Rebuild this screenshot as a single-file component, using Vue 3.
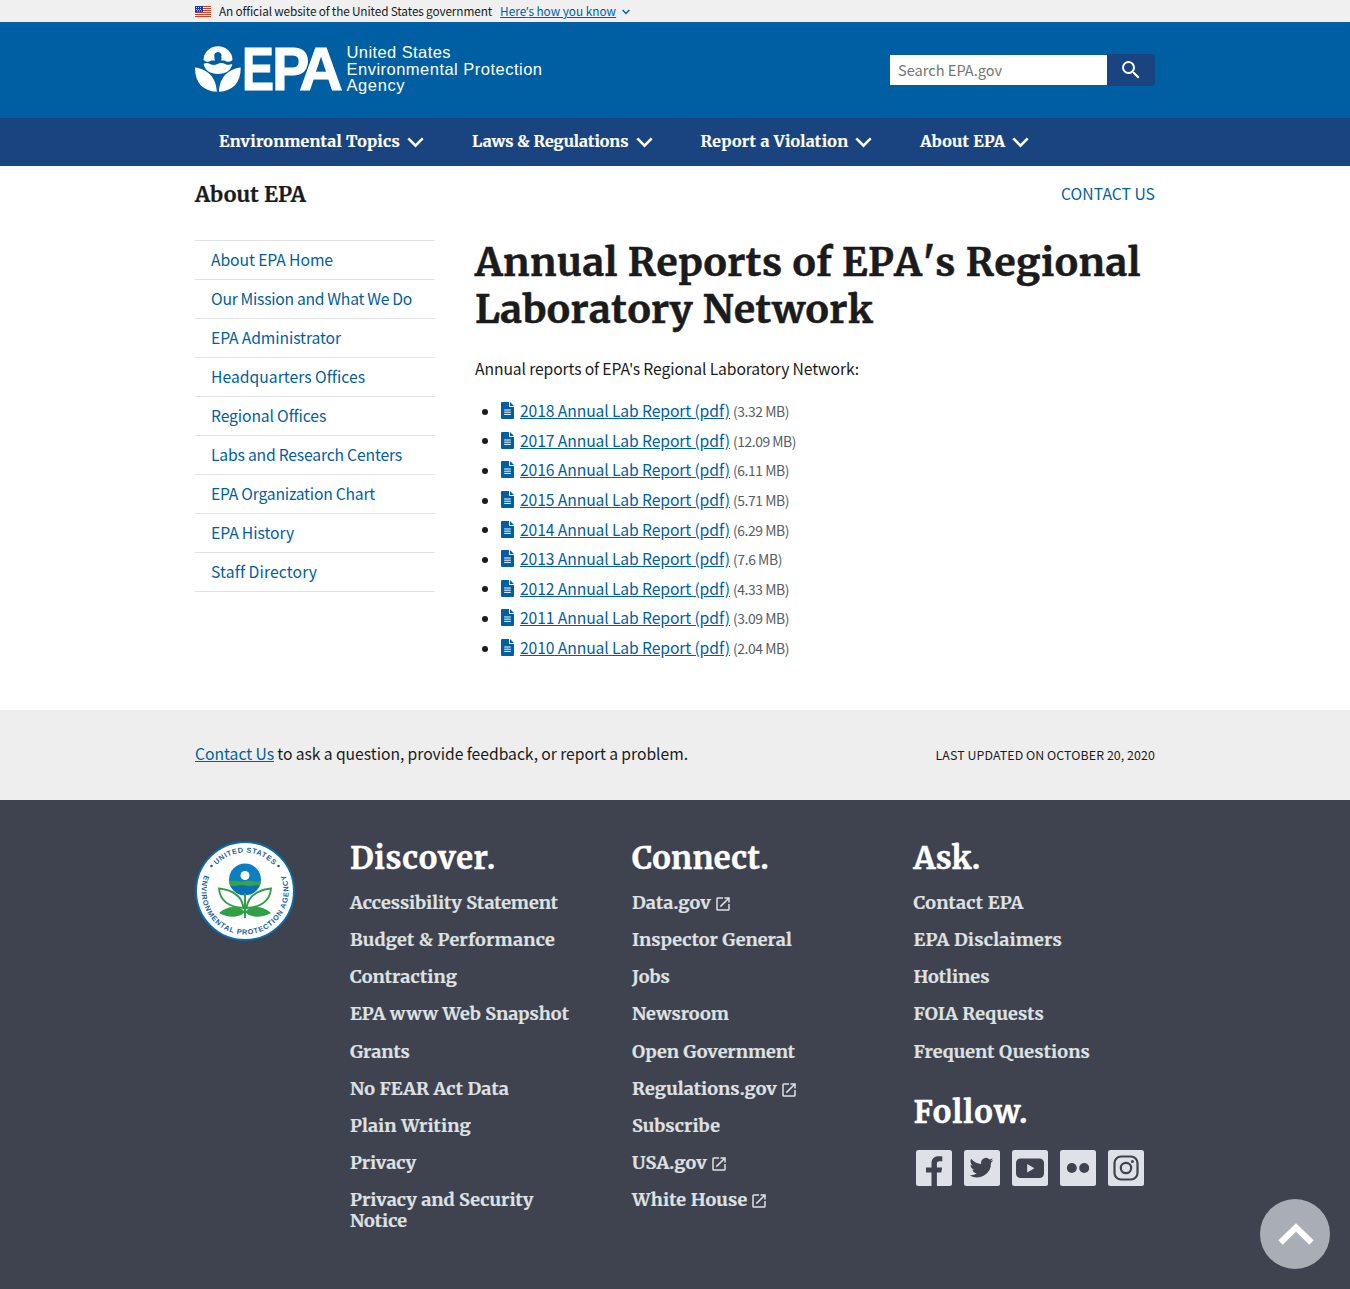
<script setup>
// Tracks a text run so that it fills the given width in pixels.
const vFit = {
  mounted(el, { value }) {
    if (!value) return
    const natural = el.getBoundingClientRect().width
    const count = el.textContent.length
    el.style.letterSpacing = ((value - natural) / count).toFixed(3) + 'px'
  },
}

const menu = [
  { label: 'Environmental Topics', w: 181 },
  { label: 'Laws & Regulations', w: 156.6 },
  { label: 'Report a Violation', w: 147.7 },
  { label: 'About EPA', w: 85 },
]

const sidebar = [
  { label: 'About EPA Home', w: 122 },
  { label: 'Our Mission and What We Do', w: 201 },
  { label: 'EPA Administrator', w: 130 },
  { label: 'Headquarters Offices', w: 154 },
  { label: 'Regional Offices', w: 115 },
  { label: 'Labs and Research Centers', w: 191 },
  { label: 'EPA Organization Chart', w: 164 },
  { label: 'EPA History', w: 83 },
  { label: 'Staff Directory', w: 106 },
]

const reports = [
  { year: 2018, size: '3.32 MB', w: 56 },
  { year: 2017, size: '12.09 MB', w: 63 },
  { year: 2016, size: '6.11 MB', w: 56 },
  { year: 2015, size: '5.71 MB', w: 56 },
  { year: 2014, size: '6.29 MB', w: 56 },
  { year: 2013, size: '7.6 MB', w: 49 },
  { year: 2012, size: '4.33 MB', w: 56 },
  { year: 2011, size: '3.09 MB', w: 56 },
  { year: 2010, size: '2.04 MB', w: 56 },
]

const discover = [
  { label: 'Accessibility Statement', w: 208 },
  { label: 'Budget & Performance', w: 205 },
  { label: 'Contracting', w: 107 },
  { label: 'EPA www Web Snapshot', w: 219 },
  { label: 'Grants', w: 60 },
  { label: 'No FEAR Act Data', w: 159 },
  { label: 'Plain Writing', w: 121 },
  { label: 'Privacy', w: 66 },
]

const connect = [
  { label: 'Data.gov', w: 79, external: true },
  { label: 'Inspector General', w: 160 },
  { label: 'Jobs', w: 38 },
  { label: 'Newsroom', w: 97 },
  { label: 'Open Government', w: 163 },
  { label: 'Regulations.gov', w: 145, external: true },
  { label: 'Subscribe', w: 88 },
  { label: 'USA.gov', w: 75, external: true },
  { label: 'White House', w: 115.500, external: true },
]

const ask = [
  { label: 'Contact EPA', w: 110 },
  { label: 'EPA Disclaimers', w: 148.500 },
  { label: 'Hotlines', w: 76 },
  { label: 'FOIA Requests', w: 130.500 },
  { label: 'Frequent Questions', w: 176.500 },
]
</script>

<template>
  <div class="page">
    <section class="banner">
      <div class="wrap banner-row">
        <svg class="flag" width="16" height="11" viewBox="0 0 16 11">
          <rect width="16" height="11" fill="#fff" />
          <path d="M0 .5h16M0 2.5h16M0 4.5h16M0 6.5h16M0 8.5h16M0 10.5h16" stroke="#db3e1f" />
          <rect width="8" height="6" fill="#1e33b1" />
          <path d="M1 1.500h6M1 3.500h6M2 4.900h5" stroke="#fff" stroke-width=".8" stroke-dasharray="1 1" />
        </svg>
        <span v-fit="273">An official website of the United States government</span>
        <a class="banner-link"><span v-fit="116">Here<span class="apos">’</span>s how you know</span></a>
        <svg class="banner-caret" width="8" height="6" viewBox="0 0 8 6"><path d="M.6 1 4 4.400l3.400-3.400" fill="none" stroke="#005ea2" stroke-width="1.400" /></svg>
      </div>
    </section>

    <header class="masthead">
      <div class="wrap masthead-row">
        <svg class="logo" width="350" height="52" viewBox="195 44 350 52">
          <g fill="#fff">
            <path d="M203.500 60a14.500 13.800 0 0 1 29 0 7 7 0 0 1-3.500 1.800 6 6 0 0 1-4.500-1.300h-3.500c.6-1 .8-2.200.3-3.400a3.700 3.700 0 1 0-6.800 0c-.3 1.200 0 2.400.6 3.400h-4a6 6 0 0 1-4.400 1.200 7 7 0 0 1-3.200-1.700z" />
            <path d="M203.600 64c2.200-1.400 4.400-1 6.400.1 2.600 1.300 5 1.200 7.600-.1 2.600-1.300 5-1.200 7.600 0 2.400 1.200 4.700 1 7.200 0-1.400 6.500-6.700 10-14.400 10s-13-3.500-14.400-10z" />
            <path d="M195 67.500c11.500 1.600 21 8.500 21.900 24.300-13.900-.8-22-8.800-21.900-24.300zM240.700 67.500c-11.500 1.600-20.900 8.500-21.800 24.300 13.800-.8 21.900-8.800 21.800-24.300z" />
          </g>
          <g class="epa" fill="#fff" stroke="#fff" stroke-width="1.200">
            <text x="242" y="89.800" textLength="32" lengthAdjust="spacingAndGlyphs">E</text>
            <text x="272.300" y="89.800" textLength="37" lengthAdjust="spacingAndGlyphs">P</text>
            <text x="299.300" y="89.800" textLength="43.500" lengthAdjust="spacingAndGlyphs">A</text>
          </g>
          <g class="agency" fill="#fff">
            <text x="346.500" y="58.300" textLength="104">United States</text>
            <text x="346.500" y="74.700" textLength="195.500">Environmental Protection</text>
            <text x="346.500" y="91" textLength="58">Agency</text>
          </g>
        </svg>
        <form class="search">
          <input type="text" placeholder="Search EPA.gov" />
          <button type="button" aria-label="Search">
            <svg width="24" height="24" viewBox="0 0 24 24" fill="#fff"><path d="M15.500 14h-.79l-.28-.27A6.470 6.470 0 0 0 16 9.500 6.500 6.500 0 1 0 9.500 16c1.610 0 3.090-.59 4.230-1.570l.27.28v.79l5 4.990L20.490 19l-4.990-5zm-6 0C7.010 14 5 11.990 5 9.500S7.010 5 9.500 5 14 7.010 14 9.500 11.990 14 9.500 14z" /></svg>
          </button>
        </form>
      </div>
    </header>

    <nav class="menu">
      <div class="wrap menu-row">
        <a v-for="m in menu" :key="m.label">
          <span v-fit="m.w">{{ m.label }}</span>
          <svg width="17" height="11" viewBox="0 0 17 11"><path d="M1.300 1.400 8.500 8.600l7.200-7.200" fill="none" stroke="#fff" stroke-width="2.600" /></svg>
        </a>
      </div>
    </nav>

    <div class="wrap site-row">
      <h2><span v-fit="111">About EPA</span></h2>
      <a><span v-fit="94">CONTACT US</span></a>
    </div>

    <div class="wrap body-row">
      <aside>
        <a v-for="s in sidebar" :key="s.label"><span v-fit="s.w">{{ s.label }}</span></a>
      </aside>
      <main>
        <h1><span v-fit="666">Annual Reports of EPA's Regional</span><br /><span v-fit="398.500">Laboratory Network</span></h1>
        <p><span v-fit="384">Annual reports of EPA's Regional Laboratory Network:</span></p>
        <ul>
          <li v-for="r in reports" :key="r.year">
            <i class="dot"></i>
            <svg class="doc" width="13" height="17" viewBox="0 0 13 17">
              <path d="M1 0h7v5h5v11a1 1 0 0 1-1 1H1a1 1 0 0 1-1-1V1a1 1 0 0 1 1-1z" fill="#005ea2" />
              <path d="M9 0l4 4H9z" fill="#005ea2" />
              <path d="M3.200 8h6.600M3.200 10.200h6.600M3.200 12.400h6.600" stroke="#fff" />
            </svg>
            <a><span v-fit="210">{{ r.year }} Annual Lab Report (pdf)</span></a>
            <span class="size"><span v-fit="r.w">({{ r.size }})</span></span>
          </li>
        </ul>
      </main>
    </div>

    <section class="feedback">
      <div class="wrap feedback-row">
        <div><a><span v-fit="79">Contact Us</span></a><span v-fit="414" class="ask-text"> to ask a question, provide feedback, or report a problem.</span></div>
        <div class="updated"><span v-fit="219.500">LAST UPDATED ON OCTOBER 20, 2020</span></div>
      </div>
    </section>

    <footer>
      <div class="wrap footer-row">
        <svg class="seal" width="100" height="102" viewBox="-50 -51 100 102">
          <defs>
            <path id="arc-top" d="M-38.500 0A38.500 38.500 0 0 1 38.500 0" />
            <path id="arc-bottom" d="M-38.400 -20.400A43.500 43.500 0 1 0 38.400 -20.400" />
          </defs>
          <circle r="49" fill="#fff" stroke="#0a6ba8" stroke-width="2" />
          <g class="seal-text" fill="#1c5f96">
            <text text-anchor="middle"><textPath href="#arc-top" startOffset="50%" textLength="64">UNITED STATES</textPath></text>
            <text text-anchor="middle"><textPath href="#arc-bottom" startOffset="50%" textLength="169">ENVIRONMENTAL PROTECTION AGENCY</textPath></text>
            <circle cx="-33.500" cy="-25" r="1.300" /><circle cx="33.500" cy="-25" r="1.300" />
          </g>
          <circle cy="-11.500" r="16" fill="#0b7fc0" />
          <path d="M-15.800-10q5-1 8 0 4 .8 8 0t8 0q4 .6 7.600 0a16 16 0 0 1-1.300 5.500h-29.200a16 16 0 0 1-1.100-5.500z" fill="#37a24a" />
          <path d="M-14.500-5.500q3 1 7 0 4-1 8 0t8 0q4-.8 6 0A16 16 0 0 1-14.500-5.500z" fill="#0b6fb6" />
          <circle cy="-15.500" r="4.500" fill="#fff" />
          <g fill="#fff" stroke="#2fa047" stroke-width="1.900">
            <path d="M-1.500 17C-3 5-13-1-26-2.500-25 10-16 16-1.500 17zM1.500 17C3 5 13-1 26-2.500 25 10 16 16 1.500 17z" />
          </g>
          <path d="M-26 22C-17 14-6 15-1 20V2h2v18c5-5 16-6 25 2-9 5-19 5-25 0v5h-2v-5c-6 5-16 5-25 0z" fill="#2fa047" />
        </svg>

        <div class="col">
          <h3><span v-fit="146">Discover.</span></h3>
          <a v-for="l in discover" :key="l.label"><span v-fit="l.w">{{ l.label }}</span></a>
          <a><span v-fit="183.500">Privacy and Security</span><br /><span v-fit="57">Notice</span></a>
        </div>
        <div class="col">
          <h3><span v-fit="137">Connect.</span></h3>
          <a v-for="l in connect" :key="l.label">
            <span v-fit="l.w">{{ l.label }}</span>
            <svg v-if="l.external" class="ext" width="18" height="18" viewBox="0 0 24 24" fill="#dfe1e2"><path d="M19 19H5V5h7V3H5a2 2 0 0 0-2 2v14a2 2 0 0 0 2 2h14c1.100 0 2-.9 2-2v-7h-2v7zM14 3v2h3.590l-9.830 9.830 1.410 1.410L19 6.410V10h2V3h-7z" /></svg>
          </a>
        </div>
        <div class="col">
          <h3><span v-fit="67">Ask.</span></h3>
          <a v-for="l in ask" :key="l.label"><span v-fit="l.w">{{ l.label }}</span></a>
          <h3 class="follow"><span v-fit="115">Follow.</span></h3>
          <div class="social">
            <svg width="36" height="36" viewBox="0 0 36 36"><rect width="36" height="36" rx="2.500" fill="#dfe1e9" /><path d="M15.500 36V22.600H10v-5h5.500v-4.300c0-4.800 2.900-7 7-7 1.700 0 3 .1 3.800.2v4.700h-2.800c-2.100 0-2.600 1-2.600 2.600v3.800h5.200l-.8 5h-4.400V36z" fill="#3e434f" /></svg>
            <svg width="36" height="36" viewBox="0 0 36 36"><rect width="36" height="36" rx="2.500" fill="#dfe1e9" /><path transform="translate(5.500 5.500) scale(1.040)" d="M23 4.500a9.500 9.500 0 0 1-2.700.8 4.700 4.700 0 0 0 2-2.600 9.400 9.400 0 0 1-3 1.100 4.700 4.700 0 0 0-8 4.300 13.400 13.400 0 0 1-9.700-4.900 4.700 4.700 0 0 0 1.500 6.300 4.700 4.700 0 0 1-2.100-.6 4.700 4.700 0 0 0 3.800 4.700 4.700 4.700 0 0 1-2.100.1 4.700 4.700 0 0 0 4.400 3.300A9.500 9.500 0 0 1 0 18.900a13.400 13.400 0 0 0 20.600-12 9.600 9.600 0 0 0 2.400-2.400z" fill="#3e434f" /></svg>
            <svg width="36" height="36" viewBox="0 0 36 36"><rect width="36" height="36" rx="2.500" fill="#dfe1e9" /><rect x="4" y="8.500" width="28" height="19.500" rx="4.500" fill="#3e434f" /><path d="M15.200 14v8.400l7.200-4.200z" fill="#dfe1e9" /></svg>
            <svg width="36" height="36" viewBox="0 0 36 36"><rect width="36" height="36" rx="2.500" fill="#dfe1e9" /><circle cx="11.800" cy="18" r="5" fill="#3e434f" /><circle cx="24.200" cy="18" r="5" fill="#3e434f" /></svg>
            <svg width="36" height="36" viewBox="0 0 36 36"><rect width="36" height="36" rx="2.500" fill="#dfe1e9" /><g fill="none" stroke="#3e434f" stroke-width="2.200"><rect x="6.500" y="6.500" width="23" height="23" rx="6.500" /><circle cx="18" cy="18" r="5.200" /></g><circle cx="24.400" cy="11.600" r="1.500" fill="#3e434f" /></svg>
          </div>
        </div>
      </div>
    </footer>

    <a class="to-top" aria-label="Back to top">
      <svg width="36" height="24" viewBox="0 0 36 24"><path d="M2.500 20.500 18 5.500l15.500 15" fill="none" stroke="#fff" stroke-width="6" /></svg>
    </a>
  </div>
</template>

<style>
body {
  margin: 0;
}
</style>

<style scoped>
.page {
  position: relative;
  height: 1289px;
  overflow: hidden;
  display: flex;
  flex-direction: column;
  background: #fff;
  color: #1b1b1b;
  font-family: "Source Sans Pro", "Noto Sans CJK SC", sans-serif;
  font-size: 15.700px;
  line-height: 24px;
  white-space: nowrap;
  font-optical-sizing: none;
  word-spacing: -.2px;
}
.wrap {
  width: 960px;
  margin: 0 auto;
  display: flex;
}
h1, h2, h3, p, ul {
  margin: 0;
  padding: 0;
}
h1, h2, h3, .menu, .col {
  font-family: "Merriweather", "DejaVu Serif", serif;
  font-weight: 700;
  word-spacing: 0;
  -webkit-text-stroke: .2px;
}
a {
  color: #005ea2;
}

.banner {
  height: 22px;
  background: #f0f0f0;
  font-size: 11.800px;
  line-height: 22px;
}
.banner-row {
  align-items: center;
  height: 22px;
}
.flag {
  margin-right: 8px;
}
.banner-link {
  margin: 0 6px 0 8px;
  text-decoration: underline;
}
.banner-caret {
  margin-top: 2px;
}
.apos {
  font-family: "Open Sans", "Noto Sans", sans-serif;
}

.masthead {
  height: 96px;
  background: #005ea2;
}
.masthead-row {
  height: 96px;
  align-items: center;
  justify-content: space-between;
}
.logo {
  overflow: visible;
}
.epa {
  font: 700 61px "Liberation Sans", Arial, sans-serif;
}
.agency {
  font: 400 16.500px "Liberation Sans", Arial, sans-serif;
  word-spacing: 0;
}
.search {
  display: flex;
  width: 265px;
  height: 32px;
}
.search input {
  box-sizing: border-box;
  width: 217px;
  height: 30px;
  margin: 1px 0;
  padding: 0 8px 2px;
  border: 0;
  border-radius: 0;
  background: #fff;
  font: 14.600px "Source Sans Pro", "Noto Sans CJK SC", sans-serif;
}
.search input::placeholder {
  color: #757575;
}
.search button {
  width: 48px;
  height: 32px;
  padding: 0;
  border: 0;
  border-radius: 0 4px 4px 0;
  background: #1a4480;
  display: flex;
  align-items: center;
  justify-content: center;
}

.menu {
  height: 48px;
  background: #1a4480;
  font-size: 16px;
}
.menu-row {
  height: 46px;
  align-items: center;
}
.menu a {
  display: flex;
  align-items: center;
  gap: 7px;
  padding: 0 24px;
  color: #fff;
}
.menu svg {
  margin-top: 2px;
}

.site-row {
  height: 74px;
  padding-top: 16px;
  box-sizing: border-box;
  justify-content: space-between;
  align-items: flex-start;
}
.site-row h2 {
  margin-top: 1px;
  font-size: 21.300px;
  line-height: 24px;
}

.body-row {
  height: 470px;
  gap: 40px;
}
aside {
  width: 240px;
  border-top: 1px solid #dfe1e2;
  align-self: flex-start;
}
aside a {
  display: block;
  height: 38px;
  line-height: 38px;
  padding-left: 16px;
  border-bottom: 1px solid #dfe1e2;
}
h1 {
  margin-top: -1px;
  font-size: 39px;
  line-height: 47px;
  font-kerning: none;
  -webkit-text-stroke: .5px;
}
main p {
  margin-top: 24px;
  line-height: 24px;
}
main ul {
  margin-top: 15.500px;
  list-style: none;
}
main li {
  display: flex;
  align-items: center;
  height: 29.600px;
  padding-left: 7px;
}
main li a {
  text-decoration: underline;
}
.dot {
  width: 6px;
  height: 6px;
  border-radius: 50%;
  background: #1b1b1b;
  margin: 1px 13px 0 0;
}
.doc {
  margin: 0 6px 1px 0;
}
.size {
  margin-left: 3px;
  font-size: 13.900px;
  color: #565c65;
}

.feedback {
  height: 90px;
  background: #eee;
}
.feedback-row {
  height: 88px;
  align-items: center;
  justify-content: space-between;
}
.feedback a {
  text-decoration: underline;
}
.ask-text {
  white-space: pre;
}
.updated {
  font-size: 12.400px;
  margin-top: 1px;
}

footer {
  flex: 1;
  background: #3e434f;
}
.footer-row {
  padding-top: 40px;
}
.seal {
  flex: none;
  margin-right: 55px;
}
.seal-text {
  font: 700 7.300px "Liberation Sans", Arial, sans-serif;
}
.col {
  flex: none;
  width: 281.500px;
}
.col:nth-of-type(1) {
  width: 282px;
}
.col:last-child {
  width: 242px;
}
.col h3 {
  color: #fff;
  font-size: 31px;
  line-height: 36px;
  margin-bottom: 16px;
  -webkit-text-stroke: .4px;
}
.col a {
  display: block;
  color: #dfe1e2;
  font-size: 18px;
  line-height: 21px;
  margin-bottom: 16.160px;
}
.ext {
  margin: -6px 0 -6px 2.500px;
  vertical-align: 2px;
}
.col .follow {
  margin-top: 32.500px;
  margin-bottom: 20px;
}
.social {
  display: flex;
  gap: 12px;
  padding-left: 2px;
}

.to-top {
  position: absolute;
  right: 20px;
  bottom: 20px;
  width: 70px;
  height: 70px;
  border-radius: 50%;
  background: #a9aeb5;
  display: flex;
  align-items: center;
  justify-content: center;
  box-sizing: border-box;
  padding-left: 2px;
}
</style>
